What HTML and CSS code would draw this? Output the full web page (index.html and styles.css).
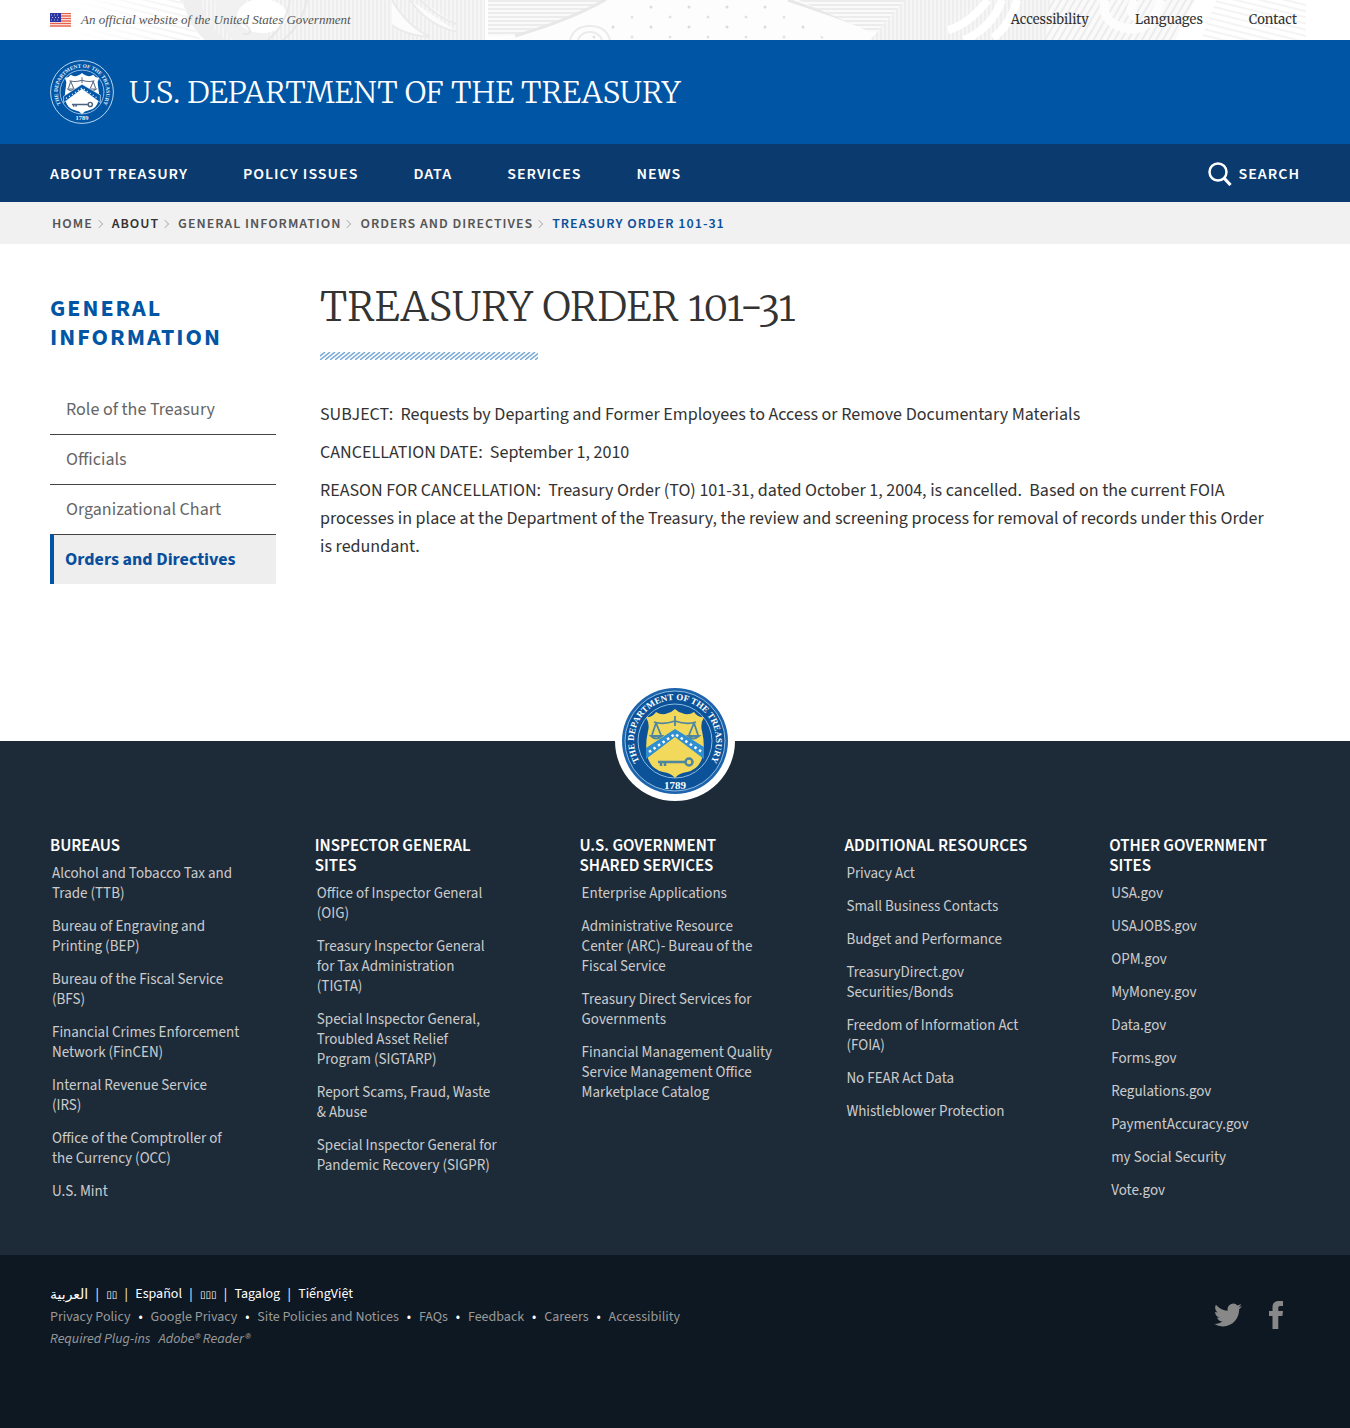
FILE: index.html
```html
<!DOCTYPE html>
<html lang="en">
<head>
<meta charset="utf-8">
<meta name="viewport" content="width=device-width, initial-scale=1">
<title>Treasury Order 101-31 | U.S. Department of the Treasury</title>
<link rel="stylesheet" href="styles.css">
</head>
<body>
<svg class="defs" width="0" height="0" aria-hidden="true">
  <defs>
    <path id="ring-top" d="M26 82.900A41 41 0 1 1 94 82.900"/>
    <path id="shield" d="M31 36q6 1 10-5q6 4 12 1q4-1 7-4q3 3 7 4q6 3 12-1q4 6 10 5q-4 7-2 14q3 13 1 24q-3 14-16 17q-8 1-12 6q-4-5-12-6q-13-3-16-17q-2-11 1-24q2-7-2-14z"/>
    <g id="scales" fill="none" stroke-width="1.800">
      <path d="M39 41q9 3 21-1q12 4 21 1M60 35v10M41 42l-4 12M41 42l5 12M79 42l-5 12M79 42l4 12"/>
      <path d="M36 55q5 5 11 0zM73 55q5 5 11 0z"/>
    </g>
    <g id="key" fill="none" stroke-width="2.500">
      <path d="M43 81h27M46 81v4M50 81v4"/><circle cx="74" cy="81" r="3.500"/>
    </g>
  </defs>
</svg>

<header>
  <div class="banner">
    <svg class="engraving" viewBox="0 0 1350 40" preserveAspectRatio="xMidYMid slice" aria-hidden="true">
      <defs>
        <pattern id="lines-h" width="4" height="4" patternUnits="userSpaceOnUse"><path d="M0 0h4v4H0z" fill="#fafafa"/><path d="M0 1h4" stroke="#e8e8e8" stroke-width="1.500"/></pattern>
        <pattern id="lines-v" width="4" height="4" patternUnits="userSpaceOnUse"><path d="M0 0h4v4H0z" fill="#f6f6f6"/><path d="M1 0v4" stroke="#ececec" stroke-width="1.500"/></pattern>
        <pattern id="lines-d" width="6" height="6" patternUnits="userSpaceOnUse" patternTransform="rotate(30)"><path d="M0 0h6v6H0z" fill="#fafafa"/><path d="M1 0v6" stroke="#ececec" stroke-width="2"/></pattern>
        <pattern id="lines-s" width="6" height="6" patternUnits="userSpaceOnUse" patternTransform="rotate(14)"><path d="M0 1h6" stroke="#f0f0f0" stroke-width="1.500"/></pattern>
        <pattern id="dots" width="38" height="20" patternUnits="userSpaceOnUse"><circle cx="5" cy="7" r="1.500" fill="#dcdcdc"/><circle cx="24" cy="17" r="1.500" fill="#e2e2e2"/></pattern>
        <linearGradient id="fade"><stop offset="0" stop-color="#fff"/><stop offset="1" stop-color="#fff" stop-opacity="0"/></linearGradient>
      </defs>
      <path d="M70 0h110l20 40H70z" fill="url(#lines-s)"/>
      <path d="M70 0h110v40H70z" fill="url(#fade)"/>
      <path d="M180 0h160l30 40H205z" fill="url(#lines-v)"/>
      <path d="M183 0q5 25 22 40h20Q203 20 201 0z" fill="#efefef"/>
      <path d="M215 0q3 25 18 40h40q-26-20-28-40z" fill="#f1f1f1"/>
      <ellipse cx="262" cy="16" rx="25" ry="17" fill="#fff"/>
      <path d="M235 27q7-8 13 0t-5 7M290 0q-4 25-22 40M307 0q-5 25-24 40" fill="none" stroke="#e8e8e8" stroke-width="2"/>
      <path d="M340 0h60l14 40h-60z" fill="url(#lines-v)"/>
      <path d="M385 0h100v40H370z" fill="url(#lines-v)"/>
      <path d="M392 0q14 25 38 37q-25-2-38-12M410 0q18 26 48 32M420 0q18 17 36 24" fill="#fcfcfc" stroke="#ebebeb" stroke-width="2"/>
      <path d="M488 0h120Q570 20 515 36h-27z" fill="url(#lines-h)"/>
      <path d="M515 36Q570 20 608 0h180q40 15 85 30v10H500z" fill="#fdfdfd"/>
      <path d="M515 36Q570 20 605 0M788 0q42 14 85 30" fill="none" stroke="#e8e8e8" stroke-width="3"/>
      <path d="M575 34q40-18 62-34h130q30 16 60 40H575z" fill="url(#dots)"/>
      <path d="M570 40q4-14 20-14t20 14M578 40q3-8 12-8t12 8" fill="none" stroke="#ebebeb" stroke-width="2"/>
      <path d="M798 0h112v30l-40 2z" fill="url(#lines-h)"/>
      <path d="M905 0h150v40H870z" fill="url(#lines-v)"/>
      <path d="M988 0q-20 25-40 30M1002 0q-10 28-38 40M1017 0q-6 24-24 38" fill="none" stroke="#fff" stroke-width="8"/>
      <path d="M1050 0h145l-20 40h-130z" fill="url(#lines-d)"/>
      <path d="M1105 0q-5 22 20 28t36-28M1135 0q-8 12 2 18" fill="none" stroke="#fdfdfd" stroke-width="9"/>
      <path d="M1216 0h90v40h-105z" fill="url(#lines-s)"/>
    </svg>
    <div class="banner-row">
      <p class="official">
        <svg width="21" height="15" viewBox="0 0 21 15" aria-hidden="true">
          <path fill="#fff" d="M0 0h21v15H0z"/>
          <path d="M0 .5h21M0 3h21M0 5.500h21M0 8h21M0 10.500h21M0 13h21" stroke="#e8604c" stroke-width="1.300"/>
          <path fill="#2b36a0" d="M0 0h11v9H0z"/>
          <path d="M1 2h9M2 4.500h9M1 7h9" stroke="#b8bdf0" stroke-dasharray="1 2"/>
        </svg>
        An official website of the United States Government
      </p>
      <nav class="utility" aria-label="Utility">
        <a href="#">Accessibility</a><a href="#">Languages</a><a href="#">Contact</a>
      </nav>
    </div>
  </div>

  <div class="brand">
    <svg width="64" height="64" viewBox="6 6 108 108" aria-hidden="true">
      <g fill="none" stroke="#cfe6fa"><circle cx="60" cy="60" r="53" stroke-width="1.500"/><circle cx="60" cy="60" r="37" stroke-width="1.200"/></g>
      <g class="seal-text" fill="#e4f2ff">
        <text text-anchor="middle"><textPath href="#ring-top" startOffset="50%">THE DEPARTMENT OF THE TREASURY</textPath></text>
        <text class="year" x="60" y="108" text-anchor="middle">1789</text>
      </g>
      <use href="#shield" fill="#fff"/>
      <use href="#scales" stroke="#5d6f86"/>
      <path d="M29 78l31-23 31 23v-13L60 47 29 67z" fill="#0056a8" stroke="#fff"/>
      <path d="M33 71l27-18 27 18" fill="none" stroke="#fff" stroke-width="2" stroke-dasharray="2 4"/>
      <use href="#key" stroke="#4a6280"/>
    </svg>
    <span>U.S. DEPARTMENT OF THE TREASURY</span>
  </div>

  <nav class="main-nav" aria-label="Main">
    <a href="#">ABOUT TREASURY</a><a href="#">POLICY ISSUES</a><a href="#">DATA</a><a href="#">SERVICES</a><a href="#">NEWS</a>
    <button class="search" type="button">
      <svg width="24" height="24" viewBox="0 0 24 24" fill="none" stroke="currentColor" aria-hidden="true"><circle cx="10" cy="10" r="8.500" stroke-width="2.500"/><path d="M16 16l6.500 7" stroke-width="3.200"/></svg>
      SEARCH
    </button>
  </nav>
</header>

<nav class="crumbs" aria-label="Breadcrumb">
  <ol>
    <li><a href="#">HOME</a></li>
    <li><a class="dark" href="#">ABOUT</a></li>
    <li><a href="#">GENERAL INFORMATION</a></li>
    <li><a href="#">ORDERS AND DIRECTIVES</a></li>
    <li><a class="here" href="#" aria-current="page">TREASURY ORDER 101-31</a></li>
  </ol>
</nav>

<div class="page">
  <aside>
    <h2>GENERAL INFORMATION</h2>
    <ul class="side">
      <li><a href="#">Role of the Treasury</a></li>
      <li><a href="#">Officials</a></li>
      <li><a href="#">Organizational Chart</a></li>
      <li><a class="active" href="#">Orders and Directives</a></li>
    </ul>
  </aside>
  <main>
    <h1>TREASURY ORDER 101-31</h1>
    <svg class="rule" width="218" height="8" aria-hidden="true">
      <defs><pattern id="hatch" width="5" height="8" patternUnits="userSpaceOnUse"><path d="M-10 8L0 0M-5 8L5 0M0 8L10 0" stroke="#7aaad8" stroke-width="1.400"/></pattern></defs>
      <path fill="url(#hatch)" d="M0 0h218v8H0z"/>
    </svg>
    <p>SUBJECT:&nbsp; Requests by Departing and Former Employees to Access or Remove Documentary Materials</p>
    <p>CANCELLATION DATE:&nbsp; September 1, 2010</p>
    <p>REASON FOR CANCELLATION:&nbsp; Treasury Order (TO) 101-31, dated October 1, 2004, is cancelled.&nbsp; Based on the current FOIA processes in place at the Department of the Treasury, the review and screening process for removal of records under this Order is redundant.</p>
  </main>
</div>

<footer>
  <div class="upper">
    <svg class="seal" width="120" height="120" viewBox="0 0 120 120" role="img" aria-label="Treasury seal">
      <circle cx="60" cy="60" r="60" fill="#fff"/>
      <circle cx="60" cy="60" r="53" fill="#1d64ad"/>
      <circle cx="60" cy="60" r="50" fill="#0b5299" stroke="#8dbbe2"/>
      <circle cx="60" cy="60" r="37" fill="#0b5299" stroke="#8dbbe2"/>
      <g class="seal-text" fill="#fff">
        <text text-anchor="middle"><textPath href="#ring-top" startOffset="50%">THE DEPARTMENT OF THE TREASURY</textPath></text>
        <text class="year" x="60" y="108" text-anchor="middle">1789</text>
      </g>
      <use href="#shield" fill="#f2d95b"/>
      <use href="#scales" stroke="#4d86a0"/>
      <path d="M31 78l29-22 29 22v-12L60 48 31 67z" fill="#2f8fd0"/>
      <path d="M34 71l26-18 27 18" fill="none" stroke="#fff" stroke-width="2.500" stroke-dasharray="2.500 3"/>
      <use href="#key" stroke="#4d86a0"/>
    </svg>
    <div class="columns">
      <section>
        <h3>BUREAUS</h3>
        <ul>
          <li><a href="#">Alcohol and Tobacco Tax and Trade (TTB)</a></li>
          <li><a href="#">Bureau of Engraving and Printing (BEP)</a></li>
          <li><a href="#">Bureau of the Fiscal Service (BFS)</a></li>
          <li><a href="#">Financial Crimes Enforcement Network (FinCEN)</a></li>
          <li><a href="#">Internal Revenue Service<br>(IRS)</a></li>
          <li><a href="#">Office of the Comptroller of<br>the Currency (OCC)</a></li>
          <li><a href="#">U.S. Mint</a></li>
        </ul>
      </section>
      <section>
        <h3>INSPECTOR GENERAL SITES</h3>
        <ul>
          <li><a href="#">Office of Inspector General (OIG)</a></li>
          <li><a href="#">Treasury Inspector General<br>for Tax Administration<br>(TIGTA)</a></li>
          <li><a href="#">Special Inspector General,<br>Troubled Asset Relief<br>Program (SIGTARP)</a></li>
          <li><a href="#">Report Scams, Fraud, Waste<br>&amp; Abuse</a></li>
          <li><a href="#">Special Inspector General for Pandemic Recovery (SIGPR)</a></li>
        </ul>
      </section>
      <section>
        <h3>U.S. GOVERNMENT SHARED SERVICES</h3>
        <ul>
          <li><a href="#">Enterprise Applications</a></li>
          <li><a href="#">Administrative Resource<br>Center (ARC)- Bureau of the<br>Fiscal Service</a></li>
          <li><a href="#">Treasury Direct Services for Governments</a></li>
          <li><a href="#">Financial Management Quality Service Management Office Marketplace Catalog</a></li>
        </ul>
      </section>
      <section>
        <h3 class="one-line">ADDITIONAL RESOURCES</h3>
        <ul>
          <li><a href="#">Privacy Act</a></li>
          <li><a href="#">Small Business Contacts</a></li>
          <li><a href="#">Budget and Performance</a></li>
          <li><a href="#">TreasuryDirect.gov Securities/Bonds</a></li>
          <li><a href="#">Freedom of Information Act (FOIA)</a></li>
          <li><a href="#">No FEAR Act Data</a></li>
          <li><a href="#">Whistleblower Protection</a></li>
        </ul>
      </section>
      <section>
        <h3>OTHER GOVERNMENT SITES</h3>
        <ul>
          <li><a href="#">USA.gov</a></li>
          <li><a href="#">USAJOBS.gov</a></li>
          <li><a href="#">OPM.gov</a></li>
          <li><a href="#">MyMoney.gov</a></li>
          <li><a href="#">Data.gov</a></li>
          <li><a href="#">Forms.gov</a></li>
          <li><a href="#">Regulations.gov</a></li>
          <li><a href="#">PaymentAccuracy.gov</a></li>
          <li><a href="#">my Social Security</a></li>
          <li><a href="#">Vote.gov</a></li>
        </ul>
      </section>
    </div>
  </div>

  <div class="lower">
    <div>
      <ul class="inline langs">
        <li><a class="arabic" href="#">العربية</a></li><li><a class="box" href="#">▯▯</a></li><li><a href="#">Español</a></li><li><a class="box" href="#">▯▯▯</a></li><li><a href="#">Tagalog</a></li><li><a href="#">TiếngViệt</a></li>
      </ul>
      <ul class="inline legal">
        <li><a href="#">Privacy Policy</a></li><li><a href="#">Google Privacy</a></li><li><a href="#">Site Policies and Notices</a></li><li><a href="#">FAQs</a></li><li><a href="#">Feedback</a></li><li><a href="#">Careers</a></li><li><a href="#">Accessibility</a></li>
      </ul>
      <p class="plugins"><span>Required Plug-ins</span><a href="#">Adobe® Reader®</a></p>
    </div>
    <div class="social">
      <a href="#" aria-label="Twitter"><svg width="28" height="28" viewBox="0 0 24 24" fill="currentColor"><path d="M23.953 4.570a10 10 0 01-2.825.775 4.958 4.958 0 002.163-2.723c-.951.555-2.005.959-3.127 1.184a4.920 4.920 0 00-8.384 4.482C7.690 8.095 4.067 6.130 1.640 3.162a4.822 4.822 0 00-.666 2.475c0 1.710.870 3.213 2.188 4.096a4.904 4.904 0 01-2.228-.616v.060a4.923 4.923 0 003.946 4.827 4.996 4.996 0 01-2.212.085 4.936 4.936 0 004.604 3.417 9.867 9.867 0 01-6.102 2.105c-.390 0-.779-.023-1.170-.067a13.995 13.995 0 007.557 2.209c9.053 0 13.998-7.496 13.998-13.985 0-.210 0-.420-.015-.630A9.935 9.935 0 0024 4.590z"/></svg></a>
      <a href="#" aria-label="Facebook"><svg width="14" height="28" viewBox="0 0 14 28" fill="currentColor"><path d="M3.500 28V15H0v-5h3.500V6.500C3.500 2.300 5.700 0 9.800 0H14v5h-2.700C9.700 5 9.300 5.700 9.300 7v3H14l-.6 5H9.300v13z"/></svg></a>
    </div>
  </div>
</footer>
</body>
</html>
```

FILE: styles.css
```css
* { box-sizing: border-box; }
body {
  margin: 0;
  background: #fff;
  color: #333;
  font-family: "Source Sans 3", "Source Sans Pro", "Noto Sans CJK SC", "DejaVu Sans", sans-serif;
  font-size: 18px;
  line-height: 28px;
}
a { color: inherit; text-decoration: none; }
ul, ol { list-style: none; margin: 0; padding: 0; }
h1, h2, h3, p { margin: 0; }
svg { display: block; flex: none; }
.defs { position: absolute; }

.banner { position: relative; }
.engraving { position: absolute; inset: 0; width: 100%; height: 100%; }
.banner-row {
  position: relative;
  display: flex;
  justify-content: space-between;
  align-items: center;
  height: 40px;
  padding: 0 53px 0 50px;
}
.official {
  display: flex;
  align-items: center;
  gap: 10px;
  color: #555;
  font: italic 13px/20px "Liberation Serif", serif;
}
.utility { display: flex; gap: 46px; font: 13px/20px "Merriweather", "Liberation Serif", serif; }

.brand {
  display: flex;
  align-items: center;
  gap: 15px;
  padding: 20px 50px;
  background: #0055a5;
  color: #fff;
  font: 300 30px/64px "Merriweather", "Liberation Serif", serif;
}
.seal-text { font: bold 9px "Liberation Serif", serif; }
.seal-text .year { font-size: 11px; }

.main-nav {
  display: flex;
  align-items: center;
  gap: 55px;
  padding: 16px 50px 14px;
  background: #0a3a6e;
  color: #fff;
  font-size: 16px;
  font-weight: 600;
  letter-spacing: 1px;
}
.search {
  display: flex;
  align-items: center;
  gap: 6px;
  margin-left: auto;
  padding: 0;
  border: 0;
  background: none;
  color: inherit;
  font: inherit;
  letter-spacing: inherit;
}

.crumbs { padding: 8px 52px 6px; background: #f1f1f1; color: #555; font-size: 14px; font-weight: 600; letter-spacing: 1px; }
.crumbs ol { display: flex; }
.crumbs li { display: flex; align-items: center; }
.crumbs li + li::before {
  content: "";
  width: 5px;
  height: 5px;
  margin: 0 10px 0 3px;
  border: solid #bbb;
  border-width: 1px 1px 0 0;
  rotate: 45deg;
}
.crumbs .dark { color: #333; }
.crumbs .here { color: #0a4f9c; }

.page { display: grid; grid-template-columns: 226px 1fr; gap: 44px; padding: 36px 80px 157px 50px; }
aside h2 { margin: 14px 0 33px; color: #0055a5; font-size: 24px; line-height: 29px; letter-spacing: 2px; }
.side a { display: block; padding: 11px 16px 10px; color: #666; }
.side li + li a { border-top: 1px solid #444; }
.side a.active { padding-left: 11px; border-left: 4px solid #0055a5; background: #eee; color: #0a4f9c; font-weight: bold; }

h1 { font: 300 40px/54px "Merriweather", "Liberation Serif", serif; font-variant-numeric: oldstyle-nums; }
.rule { margin: 18px 0 41px; }
main p + p { margin-top: 10px; }

footer { color: #ccc; }
.upper { position: relative; padding: 95px 50px 53px; background: #1d2b39; }
.seal { position: absolute; top: -60px; left: 50%; translate: -50%; }
.columns { display: grid; grid-template-columns: repeat(5, minmax(0, 1fr)); gap: 74px; font-size: 15px; line-height: 20px; }
h3 { margin-bottom: 8px; color: #fff; font-size: 17px; line-height: 20px; font-weight: 600; }
.one-line { white-space: nowrap; }
.columns ul { display: grid; gap: 13px; margin-right: -4px; padding-left: 2px; }

.lower {
  display: flex;
  justify-content: space-between;
  padding: 28px 67px 78px 50px;
  background: #0d1822;
  font-size: 14px;
  line-height: 22px;
}
.inline { display: flex; }
.langs { color: #fff; }
.legal, .plugins { color: #999; }
.inline li + li::before { display: inline-block; width: 20px; color: #fff; text-align: center; }
.langs li + li::before { content: "|"; width: 18px; }
.legal li + li::before { content: "•"; }
.arabic { font: 14px/22px "DejaVu Sans", sans-serif; }
.box { font: 10px/22px "DejaVu Sans", sans-serif; }
.plugins { display: flex; gap: 8px; font-style: italic; }
.social { display: flex; gap: 27px; padding-top: 18px; color: #888; }
```
